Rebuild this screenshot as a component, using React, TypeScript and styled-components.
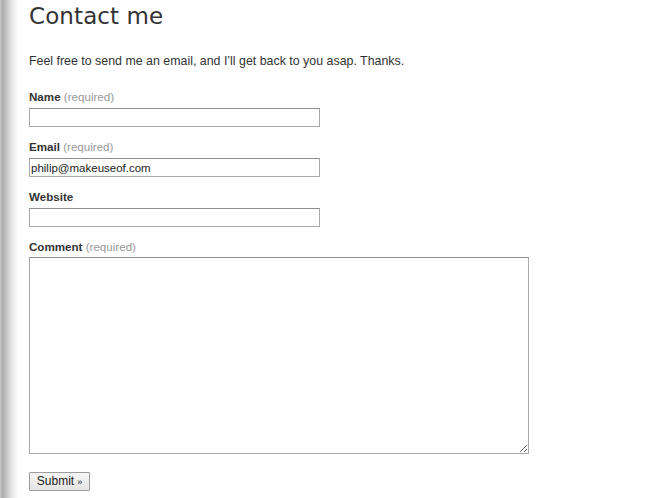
import styled, { createGlobalStyle } from 'styled-components'

const GlobalStyle = createGlobalStyle`
    html, body {
        margin: 0;
        padding: 0;
        height: 100%;
    }
    body {
        background: linear-gradient(to right, #c4c4c4 0, #adadad 3px, #d6d6d6 9px, #f4f4f4 15px, #fff 19px);
        font-family: "Liberation Sans", Arial, sans-serif;
        color: #333;
    }
`

const Page = styled.main`
    padding: 0 0 0 29px;
`

const Title = styled.h1`
    margin: 0;
    padding-top: 1px;
    font-family: "DejaVu Sans", Verdana, sans-serif;
    font-weight: normal;
    font-size: 23px;
    line-height: 30px;
    color: #333;
    letter-spacing: 0.1px;
`

const Intro = styled.p`
    margin: 22px 0 0;
    font-size: 12.4px;
    line-height: 16px;
    color: #333;
`

const Form = styled.form`
    display: flex;
    flex-direction: column;
    margin-top: 20px;
`

const Field = styled.div<{ $gap?: number }>`
    display: flex;
    flex-direction: column;
    align-items: flex-start;
    gap: ${({ $gap }) => ($gap !== undefined ? $gap : 3)}px;
    margin-bottom: 12px;
`

const Label = styled.label`
    font-size: 11.6px;
    line-height: 16px;
    font-weight: bold;
    color: #333;
`

const Hint = styled.span`
    font-weight: normal;
    color: #999;
`

const Input = styled.input`
    box-sizing: border-box;
    width: 291px;
    height: 19px;
    margin: 0;
    padding: 0 1px;
    border: 1px solid #a9a9a9;
    border-top-color: #8f8f8f;
    background: #fff;
    font-family: "Liberation Sans", Arial, sans-serif;
    font-size: 11.5px;
    color: #222;
    outline: none;
`

const TextArea = styled.textarea`
    box-sizing: border-box;
    width: 500px;
    height: 197px;
    margin: 0;
    padding: 2px;
    border: 1px solid #a9a9a9;
    border-top-color: #8f8f8f;
    background: #fff;
    font-family: "Liberation Sans", Arial, sans-serif;
    font-size: 12px;
    outline: none;
`

const SubmitButton = styled.button`
    align-self: flex-start;
    box-sizing: border-box;
    width: 61px;
    height: 19px;
    margin-top: 6px;
    padding: 0 0 1px;
    border: 1px solid #9c9c9c;
    border-radius: 1px;
    background: linear-gradient(to bottom, #f6f6f6, #e4e4e4);
    font-family: "Liberation Sans", Arial, sans-serif;
    font-size: 12px;
    color: #222;
    cursor: pointer;
`

const Raquo = styled.span`
    font-size: 9px;
    margin-left: 3px;
`

export default function App() {
    return (
        <>
            <GlobalStyle />
            <Page>
                <Title>Contact me</Title>
                <Intro>Feel free to send me an email, and I’ll get back to you asap. Thanks.</Intro>
                <Form onSubmit={(e) => e.preventDefault()}>
                    <Field>
                        <Label htmlFor="name">
                            Name <Hint>(required)</Hint>
                        </Label>
                        <Input id="name" type="text" />
                    </Field>
                    <Field>
                        <Label htmlFor="email">
                            Email <Hint>(required)</Hint>
                        </Label>
                        <Input id="email" type="text" defaultValue="philip@makeuseof.com" />
                    </Field>
                    <Field>
                        <Label htmlFor="website">Website</Label>
                        <Input id="website" type="text" />
                    </Field>
                    <Field $gap={2}>
                        <Label htmlFor="comment">
                            Comment <Hint>(required)</Hint>
                        </Label>
                        <TextArea id="comment" />
                    </Field>
                    <SubmitButton type="submit">
                        Submit<Raquo>»</Raquo>
                    </SubmitButton>
                </Form>
            </Page>
        </>
    )
}
